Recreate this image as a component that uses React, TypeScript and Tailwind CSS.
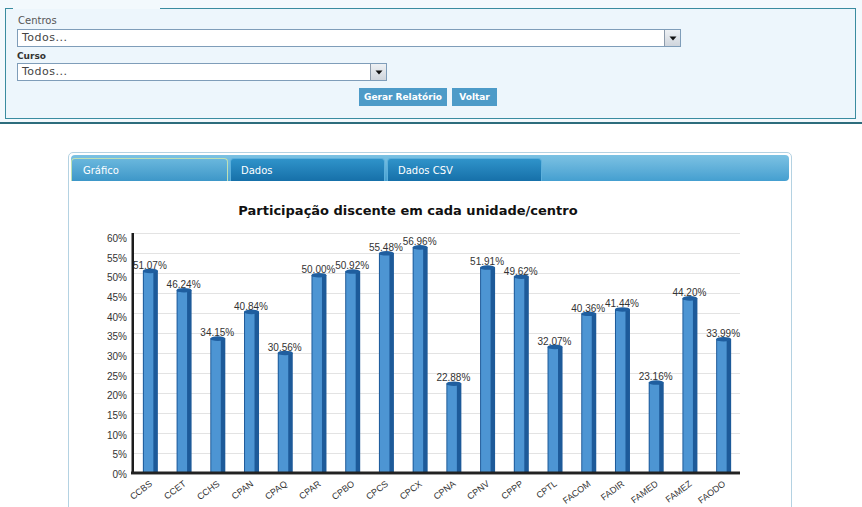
import React from "react";

const data: [string, number][] = [
  ["CCBS", 51.07],
  ["CCET", 46.24],
  ["CCHS", 34.15],
  ["CPAN", 40.84],
  ["CPAQ", 30.56],
  ["CPAR", 50.0],
  ["CPBO", 50.92],
  ["CPCS", 55.48],
  ["CPCX", 56.96],
  ["CPNA", 22.88],
  ["CPNV", 51.91],
  ["CPPP", 49.62],
  ["CPTL", 32.07],
  ["FACOM", 40.36],
  ["FADIR", 41.44],
  ["FAMED", 23.16],
  ["FAMEZ", 44.2],
  ["FAODO", 33.99],
];

function Arrow() {
  return (
    <div className="w-[16px] h-full border-l border-[#8d9bab] bg-gradient-to-b from-[#eef1f4] to-[#cfd5dc] flex items-center justify-center">
      <svg width="8" height="5" viewBox="0 0 8 5">
        <path d="M0.5 0.5 L7.5 0.5 L4 4.5 Z" fill="#111" />
      </svg>
    </div>
  );
}

function Chart() {
  const x0 = 133;
  const x1 = 740;
  const slot = (x1 - x0) / data.length;
  const yOf = (v: number) => 473 - 4 * v;
  const ticks = [0, 5, 10, 15, 20, 25, 30, 35, 40, 45, 50, 55, 60];
  return (
    <svg width="718" height="326" className="block">
      <g transform="translate(-71,-181)">
        <text
          x={408}
          y={215}
          textAnchor="middle"
          fontFamily="DejaVu Sans, sans-serif"
          fontWeight="bold"
          fontSize="13"
          fill="#111"
        >
          Participação discente em cada unidade/centro
        </text>
        {ticks.map((t) => (
          <line key={"g" + t} x1={x0} x2={x1} y1={yOf(t) + 0.5} y2={yOf(t) + 0.5} stroke="#e3e3e3" strokeWidth="1" />
        ))}
        {ticks.map((t) => (
          <text
            key={"l" + t}
            x={127}
            y={474.3 - t * 3.933 + 3.6}
            textAnchor="end"
            fontFamily="Liberation Sans, Arial, sans-serif"
            fontSize="10"
            fill="#333"
          >
            {t}%
          </text>
        ))}
        {data.map(([name, v], i) => {
          const c = x0 + (i + 0.5) * slot;
          const top = yOf(v);
          return (
            <g key={name}>
              <rect x={c - 7} y={top + 2} width={15} height={472 - top - 2} fill="#1d5a99" />
              <rect x={c - 6} y={top + 3.5} width={9.5} height={472 - top - 3.5} fill="#4d95d3" />
              <ellipse cx={c + 0.5} cy={top + 2.2} rx={7.5} ry={2.3} fill="#1f5e9f" />
              <text
                x={c}
                y={top}
                textAnchor="middle"
                fontFamily="Liberation Sans, Arial, sans-serif"
                fontSize="10"
                fill="#333"
              >
                {v.toFixed(2)}%
              </text>
              <text
                x={c + 3}
                y={485}
                textAnchor="end"
                transform={`rotate(-37 ${c + 3} 485)`}
                fontFamily="Liberation Sans, Arial, sans-serif"
                fontSize="9"
                fill="#333"
              >
                {name}
              </text>
            </g>
          );
        })}
        <rect x={131.5} y={233} width={2.5} height={242} fill="#1c1c1c" />
        <rect x={131} y={471.5} width={609} height={2.5} fill="#222" />
        <rect x={131} y={474} width={609} height={1} fill="#9a9a9a" />
      </g>
    </svg>
  );
}

export default function App() {
  return (
    <div className="w-[862px] h-[507px] overflow-hidden bg-white font-['DejaVu_Sans',sans-serif]">
      <div className="h-[124px] bg-[#f3f9fd] border-b-2 border-[#2d6d7d] pt-[8px] pl-[5px]">
        <div className="w-[851px] h-[111px] flex flex-col bg-[#edf6fc] border-x border-b border-[#3a8ca0]">
          <div className="flex h-px shrink-0 -mx-px">
            <div className="w-[8px] bg-[#3a8ca0]" />
            <div className="w-[147px] bg-[#f3f9fd]" />
            <div className="flex-1 bg-[#3a8ca0]" />
          </div>
          <div className="flex flex-col pl-[11px]">
            <div className="mt-[6px] pl-px text-[10px] leading-[12px] text-[#555]">Centros</div>
            <div className="mt-[2px] w-[664px] h-[18px] flex bg-white border border-[#7f9db9]">
              <div className="flex-1 pl-[4px] text-[11px] leading-[16px] tracking-[0.5px] text-[#444]">Todos...</div>
              <Arrow />
            </div>
            <div className="mt-[3px] text-[9px] leading-[12px] font-bold text-[#333]">Curso</div>
            <div className="mt-px w-[370px] h-[18px] flex bg-white border border-[#7f9db9]">
              <div className="flex-1 pl-[4px] text-[11px] leading-[16px] tracking-[0.5px] text-[#444]">Todos...</div>
              <Arrow />
            </div>
            <div className="mt-[7px] mr-[16px] flex justify-center gap-[5px]">
              <div className="w-[88px] h-[18px] bg-[#4d9bc8] text-white text-[9px] font-bold leading-[18px] text-center">
                Gerar Relatório
              </div>
              <div className="w-[45px] h-[18px] bg-[#4d9bc8] text-white text-[9px] font-bold leading-[18px] text-center">
                Voltar
              </div>
            </div>
          </div>
        </div>
      </div>
      <div className="ml-[68px] mt-[28px] w-[724px] h-[400px] border border-[#b4d2e2] rounded-t-[5px] bg-white px-[2px] pt-[2px]">
        <div className="h-[26px] rounded-[4px] bg-gradient-to-b from-[#7cc2e3] to-[#449fd0] flex items-end gap-[2px]">
          <div className="w-[157px] h-[23px] rounded-t-[4px] border border-b-0 border-[#bfe0b4] bg-gradient-to-b from-[#69b7dd] to-[#3d97c8] text-white text-[10px] pl-[11px] flex items-center">
            Gráfico
          </div>
          <div className="w-[155px] h-[23px] rounded-t-[4px] border border-b-0 border-[#5cb0dc] bg-gradient-to-b from-[#2f93ca] to-[#1670a9] text-white text-[10px] pl-[10px] flex items-center">
            Dados
          </div>
          <div className="w-[155px] h-[23px] rounded-t-[4px] border border-b-0 border-[#5cb0dc] bg-gradient-to-b from-[#2f93ca] to-[#1670a9] text-white text-[10px] pl-[10px] flex items-center">
            Dados CSV
          </div>
        </div>
        <Chart />
      </div>
    </div>
  );
}
